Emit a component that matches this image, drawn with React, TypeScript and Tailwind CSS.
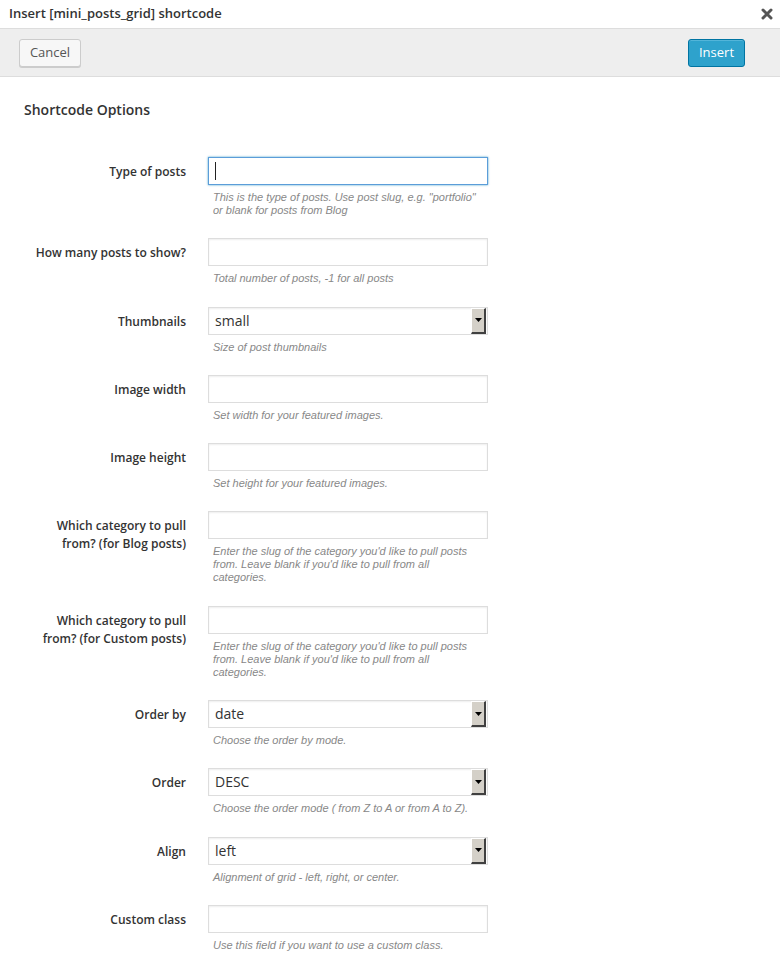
import React from 'react';

type Field = {
  label: string;
  help: string;
  kind: 'text' | 'select';
  value?: string;
  focused?: boolean;
};

const fields: Field[] = [
  { label: 'Type of posts', help: 'This is the type of posts. Use post slug, e.g. "portfolio" or blank for posts from Blog', kind: 'text', focused: true },
  { label: 'How many posts to show?', help: 'Total number of posts, -1 for all posts', kind: 'text' },
  { label: 'Thumbnails', help: 'Size of post thumbnails', kind: 'select', value: 'small' },
  { label: 'Image width', help: 'Set width for your featured images.', kind: 'text' },
  { label: 'Image height', help: 'Set height for your featured images.', kind: 'text' },
  { label: 'Which category to pull from? (for Blog posts)', help: "Enter the slug of the category you'd like to pull posts from. Leave blank if you'd like to pull from all categories.", kind: 'text' },
  { label: 'Which category to pull from? (for Custom posts)', help: "Enter the slug of the category you'd like to pull posts from. Leave blank if you'd like to pull from all categories.", kind: 'text' },
  { label: 'Order by', help: 'Choose the order by mode.', kind: 'select', value: 'date' },
  { label: 'Order', help: 'Choose the order mode ( from Z to A or from A to Z).', kind: 'select', value: 'DESC' },
  { label: 'Align', help: 'Alignment of grid - left, right, or center.', kind: 'select', value: 'left' },
  { label: 'Custom class', help: 'Use this field if you want to use a custom class.', kind: 'text' },
];

const SelectBox: React.FC<{ value: string }> = ({ value }) => (
  <div className="flex h-[28px] w-[280px] items-center border border-[#dddddd] bg-white pl-[6px] pr-[1px] shadow-[inset_0_1px_2px_rgba(0,0,0,0.07)]">
    <span className="flex-1 text-[14px] leading-none text-[#333333]">{value}</span>
    {/* classic windows dropdown button */}
    <div className="flex h-[26px] w-[15px] items-center justify-center border-t border-l border-t-white border-l-white border-r-2 border-b-2 border-r-[#404040] border-b-[#404040] bg-[#d4d0c8]">
      <svg width="7" height="4" viewBox="0 0 7 4">
        <path d="M0 0h7L3.5 4z" fill="#000" />
      </svg>
    </div>
  </div>
);

const TextBox: React.FC<{ focused?: boolean }> = ({ focused }) => (
  <div
    className={`relative h-[28px] w-[280px] border bg-white ${
      focused
        ? 'border-[#5b9dd9] shadow-[0_0_2px_rgba(30,140,190,0.8)]'
        : 'border-[#dddddd] shadow-[inset_0_1px_2px_rgba(0,0,0,0.07)]'
    }`}
  >
    {focused && <div className="absolute left-[6px] top-[4px] h-[18px] w-px bg-[#222222]" />}
  </div>
);

export default function App() {
  return (
    <div className="min-h-screen w-[780px] bg-white font-['Open_Sans',sans-serif] text-[#333333]">
      {/* Title bar */}
      <div className="flex h-[29px] items-center justify-between border-b border-[#dddddd] pl-[9px] pr-[7px]">
        <span className="text-[13px] font-semibold text-[#333333]">Insert [mini_posts_grid] shortcode</span>
        <svg width="12" height="12" viewBox="0 0 12 12">
          <path d="M2 2l8 8M10 2l-8 8" stroke="#555555" strokeWidth="3" strokeLinecap="round" />
        </svg>
      </div>

      {/* Toolbar */}
      <div className="flex h-[48px] items-center justify-between border-b border-[#dddddd] bg-[#eeeeee] pl-[19px] pr-[35px]">
        <button className="h-[28px] w-[62px] rounded-[3px] border border-[#cccccc] bg-[#f7f7f7] text-[13px] text-[#555555] shadow-[0_1px_0_#cccccc]">
          Cancel
        </button>
        <button className="h-[28px] w-[57px] rounded-[3px] border border-[#0074a2] bg-[#2ea2cc] text-[13px] text-white shadow-[inset_0_1px_0_rgba(120,200,230,0.5)]">
          Insert
        </button>
      </div>

      {/* Content */}
      <div className="pl-[20px] pt-[23px]">
        <h2 className="pl-[4px] text-[14px] font-semibold leading-[20px] text-[#333333]">Shortcode Options</h2>

        <div className="mt-[37px]">
          {fields.map((f) => (
            <div key={f.label} className="mb-[21.3px] flex">
              <div className="w-[166px] pt-[6px] text-right text-[12px] font-semibold leading-[18px] text-[#333333]">
                {f.label}
              </div>
              <div className="ml-[22px] w-[280px]">
                {f.kind === 'select' ? <SelectBox value={f.value || ''} /> : <TextBox focused={f.focused} />}
                <p className="mt-[6px] pl-[5px] pr-[6px] font-['Liberation_Sans',Arial,sans-serif] text-[11px] italic leading-[13px] text-[#888888]">
                  {f.help}
                </p>
              </div>
            </div>
          ))}
        </div>
      </div>
    </div>
  );
}
